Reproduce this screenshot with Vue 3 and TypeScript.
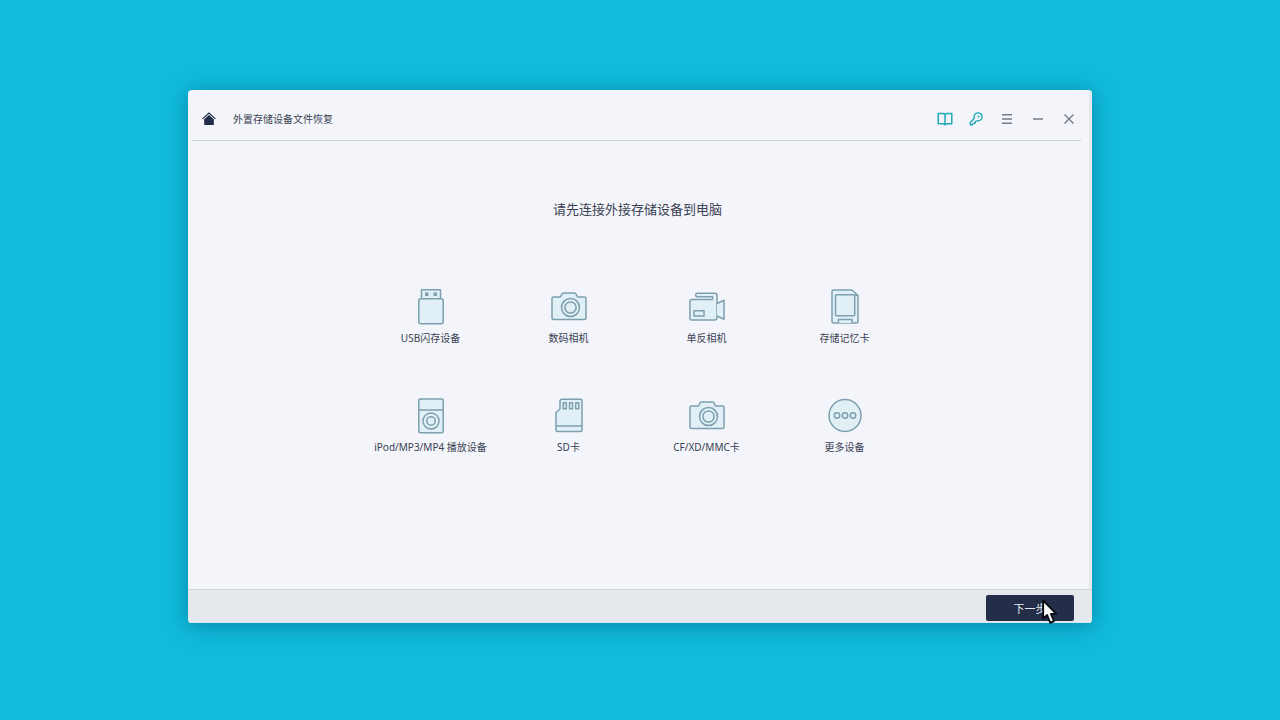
<script setup lang="ts">
interface Device {
  id: string
  label: string
}

const devices: Device[] = [
  { id: 'usb', label: 'USB闪存设备' },
  { id: 'camera', label: '数码相机' },
  { id: 'camcorder', label: '单反相机' },
  { id: 'memory', label: '存储记忆卡' },
  { id: 'player', label: 'iPod/MP3/MP4 播放设备' },
  { id: 'sd', label: 'SD卡' },
  { id: 'camera-cf', label: 'CF/XD/MMC卡' },
  { id: 'more', label: '更多设备' },
]
</script>

<template>
  <div class="desktop">
    <section class="window">
      <header class="titlebar">
        <button class="icon-btn home" type="button" aria-label="首页">
          <svg width="14" height="14" viewBox="0 0 14 14">
            <path d="M2.2 7.3 7 3l4.800 4.300V13H2.200Z" fill="#232c49" />
            <path d="M.6 6.900 7 1.100l6.400 5.800" fill="none" stroke="#232c49" stroke-width="1.200" />
          </svg>
        </button>
        <h1 class="title">外置存储设备文件恢复</h1>
        <nav class="actions">
          <button class="icon-btn" type="button" aria-label="指南">
            <svg width="16" height="16" viewBox="0 0 16 16" fill="none" stroke="#21a9b4" stroke-width="1.500" stroke-linejoin="round">
              <path d="M8 3.500C7.300 2.600 6.500 2.500 5.500 2.500H1.200v10.300h4.600c1 0 1.700.2 2.200 1 .5-.8 1.200-1 2.200-1h4.600V2.500h-4.300C9.500 2.500 8.700 2.600 8 3.500Zm0 0v10.300" />
            </svg>
          </button>
          <button class="icon-btn" type="button" aria-label="注册">
            <svg width="14" height="14" viewBox="0 0 14 14" fill="none" stroke="#21a9b4" stroke-width="1.400" stroke-linejoin="round">
              <path d="M5.300 6.200A4 4 0 1 1 8.300 8.800L6.500 9.300 6 11.200 4.200 11.400 3.500 12.700H1.300V10.400Z" />
              <circle cx="9.600" cy="4.500" r=".7" fill="#21a9b4" stroke-width=".6" />
            </svg>
          </button>
          <button class="icon-btn" type="button" aria-label="菜单">
            <svg width="12" height="12" viewBox="0 0 12 12" fill="none" stroke="#777a86" stroke-width="1.400">
              <path d="M1 1.800h10M1 6h10M1 10.200h10" />
            </svg>
          </button>
          <button class="icon-btn" type="button" aria-label="最小化">
            <svg width="12" height="12" viewBox="0 0 12 12" fill="none" stroke="#777a86" stroke-width="1.500">
              <path d="M1 6h10" />
            </svg>
          </button>
          <button class="icon-btn" type="button" aria-label="关闭">
            <svg width="12" height="12" viewBox="0 0 12 12" fill="none" stroke="#777a86" stroke-width="1.400">
              <path d="M1.500 1.500l9 9M10.500 1.500l-9 9" />
            </svg>
          </button>
        </nav>
      </header>

      <main class="content">
        <h2 class="heading">请先连接外接存储设备到电脑</h2>
        <ul class="devices">
          <li v-for="device in devices" :key="device.id" class="device">
            <svg class="glyph" width="36" height="36" viewBox="0 0 36 36">
              <g v-if="device.id === 'usb'">
                <path d="M8.500 10V.8h19V10" />
                <rect x="5.800" y="9.800" width="24.400" height="25" rx="2" />
                <rect class="solid" x="12" y="3.500" width="3.500" height="3.500" />
                <rect class="solid" x="20.500" y="3.500" width="3.500" height="3.500" />
              </g>
              <g v-else-if="device.id === 'camera' || device.id === 'camera-cf'">
                <path d="M2.500 8H8.800C10.600 8 10.300 3.900 12 3.900H24C25.700 3.900 25.400 8 27.200 8H33.500Q35 8 35 9.500V29Q35 30.500 33.500 30.500H2.500Q1 30.500 1 29V9.500Q1 8 2.500 8Z" />
                <circle cx="19.500" cy="18.500" r="9" />
                <circle cx="19.500" cy="18.500" r="5.600" />
              </g>
              <g v-else-if="device.id === 'camcorder'">
                <path d="M2.500 10.500H23.500V7.800H8Q6.800 7.800 6.800 6.500V5.500Q6.800 4.300 8 4.300H26Q28 4.300 28 6.300V29Q28 31 26 31H2.500Q.9 31 .9 29.400V12.100Q.9 10.500 2.500 10.500Z" />
                <path d="M28 14.500 35 11.300V30.200L28 27" />
                <rect x="5" y="21.800" width="10" height="5.200" />
              </g>
              <g v-else-if="device.id === 'memory'">
                <path d="M6.500 1H25L31 6.500V32.500Q31 34 29.500 34H6.500Q5 34 5 32.500V2.500Q5 1 6.500 1Z" />
                <rect x="8.500" y="5.800" width="19.200" height="21" rx="1" />
                <path d="M27.700 5.800 30.800 6.500M11.500 34V30.500H25V34" />
              </g>
              <g v-else-if="device.id === 'player'">
                <rect x="5.800" y=".9" width="24.400" height="33.800" rx="1.500" />
                <path d="M5.800 12H30.200" />
                <circle cx="18" cy="23" r="8" />
                <circle cx="18" cy="23" r="4.200" />
              </g>
              <g v-else-if="device.id === 'sd'">
                <path d="M11 1.200H29.500Q31 1.200 31 2.700V32Q31 33.500 29.500 33.500H6.500Q5 33.500 5 32V14.500L9 11V3Q9 1.200 11 1.200ZM5 28H31" />
                <path d="M12.300 4.800h3v6h-3ZM18.500 4.800h3v6h-3ZM24.700 4.800h3v6h-3Z" />
              </g>
              <g v-else>
                <circle cx="18" cy="17.500" r="16" />
                <circle cx="10" cy="17.500" r="2.700" />
                <circle cx="18" cy="17.500" r="2.700" />
                <circle cx="26" cy="17.500" r="2.700" />
              </g>
            </svg>
            <span class="label">{{ device.label }}</span>
          </li>
        </ul>
      </main>

      <footer class="footer">
        <div class="next-wrap">
          <button class="next" type="button">下一步</button>
          <svg class="pointer" width="16" height="26" viewBox="0 0 16 26" aria-hidden="true">
            <path d="M1.200 1.500V19.500L5.200 16 8.200 23.800 12 22.200 8.900 14.800H14.200Z" fill="#fff" stroke="#080a10" stroke-width="1.800" stroke-linejoin="round" />
          </svg>
        </div>
      </footer>
    </section>
  </div>
</template>

<style>
body {
  margin: 0;
  background: #10bcda;
}
</style>

<style scoped>
.desktop {
  display: flex;
  box-sizing: border-box;
  min-height: 100vh;
  padding: 90px 188px 97px;
  font-family: "Noto Sans", "Noto Sans CJK SC", sans-serif;
  color: #3a3f52;
}

.window {
  display: flex;
  flex: 1;
  flex-direction: column;
  min-width: 0;
  overflow: visible;
  border-radius: 4px;
  background: #f3f5fa;
  box-shadow: inset -3px 0 #e6e7ef, 0 3px 22px rgba(0, 72, 130, 0.5);
}

.titlebar {
  display: flex;
  align-items: center;
  height: 42px;
  margin: 0 11px 0 4px;
  padding: 8px 4px 0 9px;
  border-bottom: 1px solid #cfd1d8;
}

.icon-btn {
  display: flex;
  align-items: center;
  justify-content: center;
  width: 16px;
  height: 16px;
  padding: 0;
  border: 0;
  background: none;
}

.title {
  margin: 0 0 0 16px;
  font-size: 10px;
  font-weight: 400;
  line-height: 16px;
}

.actions {
  display: flex;
  gap: 15px;
  margin-left: auto;
}

.content {
  display: flex;
  flex: 1;
  flex-direction: column;
  align-items: center;
  padding: 58px 5px 0 0;
}

.heading {
  margin: 0;
  font-size: 13px;
  font-weight: 400;
  line-height: 20px;
}

.devices {
  display: grid;
  grid-template-columns: repeat(4, 1fr);
  row-gap: 52px;
  width: 100%;
  max-width: 552px;
  margin: 70px 0 0;
  padding: 0;
  list-style: none;
}

.device {
  display: flex;
  flex-direction: column;
  align-items: center;
  gap: 5px;
}

.glyph {
  fill: #e0f0f6;
  stroke: #7d9fae;
  stroke-width: 1.5;
  stroke-linejoin: round;
}

.solid {
  fill: #7d9fae;
  stroke: none;
}

.label {
  font-size: 10px;
  line-height: 16px;
  white-space: nowrap;
}

.footer {
  display: flex;
  justify-content: flex-end;
  padding: 5px 18px 2px 0;
  border-top: 1px solid #d3d5db;
  border-radius: 0 0 4px 4px;
  background: #e5e8ed;
  box-shadow: inset 0 -1px #d5e9f1;
}

.next-wrap {
  position: relative;
}

.next {
  display: block;
  width: 88px;
  height: 26px;
  padding: 0;
  border: 0;
  border-radius: 2px;
  background: #242e48;
  color: #e4e8f2;
  font-family: inherit;
  font-size: 11px;
}

.pointer {
  position: absolute;
  top: 4px;
  left: 56px;
}
</style>
